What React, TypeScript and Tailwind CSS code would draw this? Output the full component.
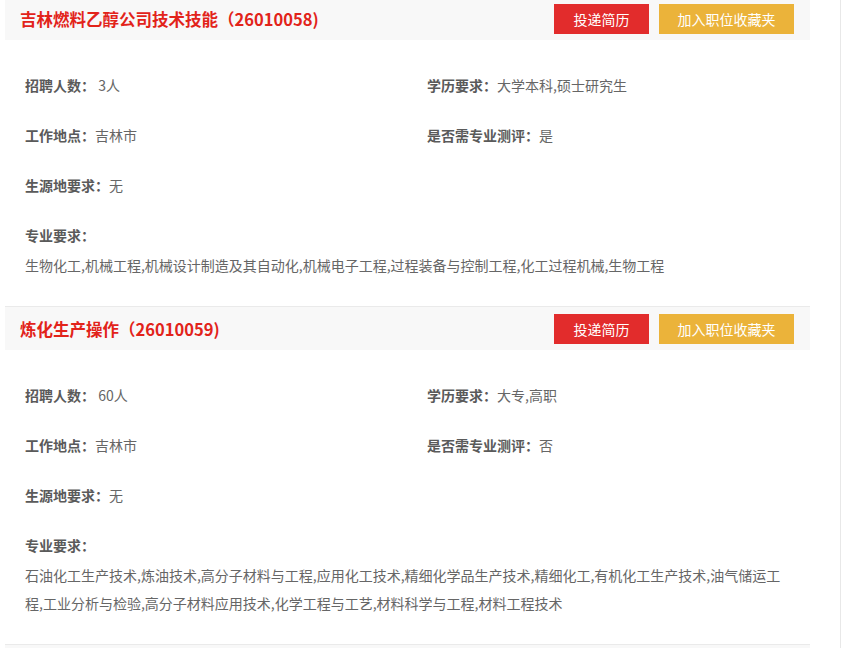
import React from "react";

type Job = {
  title: string;
  count: string;
  edu: string;
  place: string;
  test: string;
  origin: string;
  majors: string;
};

const jobs: Job[] = [
  {
    title: "吉林燃料乙醇公司技术技能（26010058)",
    count: " 3人",
    edu: "大学本科,硕士研究生",
    place: "吉林市",
    test: "是",
    origin: "无",
    majors:
      "生物化工,机械工程,机械设计制造及其自动化,机械电子工程,过程装备与控制工程,化工过程机械,生物工程",
  },
  {
    title: "炼化生产操作（26010059)",
    count: " 60人",
    edu: "大专,高职",
    place: "吉林市",
    test: "否",
    origin: "无",
    majors:
      "石油化工生产技术,炼油技术,高分子材料与工程,应用化工技术,精细化学品生产技术,精细化工,有机化工生产技术,油气储运工程,工业分析与检验,高分子材料应用技术,化学工程与工艺,材料科学与工程,材料工程技术",
  },
];

function Field({ label, value }: { label: string; value: string }) {
  return (
    <div className="h-[50px] leading-[50px] whitespace-pre">
      <span className="font-bold text-[#5a5a5a]">{label}</span>
      <span className="text-[#666]">{value}</span>
    </div>
  );
}

function JobCard({ job }: { job: Job }) {
  return (
    <div className="border-t border-[#eaeaea]">
      <div className="h-[43px] bg-[#f8f8f8] flex items-center justify-between pl-[15px] pr-[16px]">
        <div className="text-[16.5px] font-bold text-[#e2231a] leading-none pt-[1px]">
          {job.title}
        </div>
        <div className="flex gap-[10px]">
          <button className="w-[95px] h-[30px] bg-[#e22c2c] text-white text-[14px] leading-[30px]">
            投递简历
          </button>
          <button className="w-[135px] h-[30px] bg-[#ebb33a] text-white text-[14px] leading-[30px]">
            加入职位收藏夹
          </button>
        </div>
      </div>
      <div className="pt-[20px] pb-[27px] pl-[20px] text-[14px]">
        <div className="grid grid-cols-[402px_1fr]">
          <Field label="招聘人数：" value={job.count} />
          <Field label="学历要求：" value={job.edu} />
          <Field label="工作地点：" value={job.place} />
          <Field label="是否需专业测评：" value={job.test} />
          <Field label="生源地要求：" value={job.origin} />
          <div />
        </div>
        <div className="mt-[11px] leading-[28px] font-bold text-[#5a5a5a]">专业要求：</div>
        <div className="mt-[2px] w-[760px] leading-[28px] text-[#666]">{job.majors}</div>
      </div>
    </div>
  );
}

export default function App() {
  return (
    <div
      className="w-[841px] h-[648px] overflow-hidden border-r border-[#e8e8e8] bg-white"
      style={{ fontFamily: '"Noto Sans CJK SC", "Microsoft YaHei", sans-serif' }}
    >
      <div className="ml-[5px] w-[805px] -mt-[4px]">
        {jobs.map((j, i) => (
          <JobCard key={i} job={j} />
        ))}
        <div className="border-t border-[#eaeaea] h-[44px] bg-[#f8f8f8]" />
      </div>
    </div>
  );
}
